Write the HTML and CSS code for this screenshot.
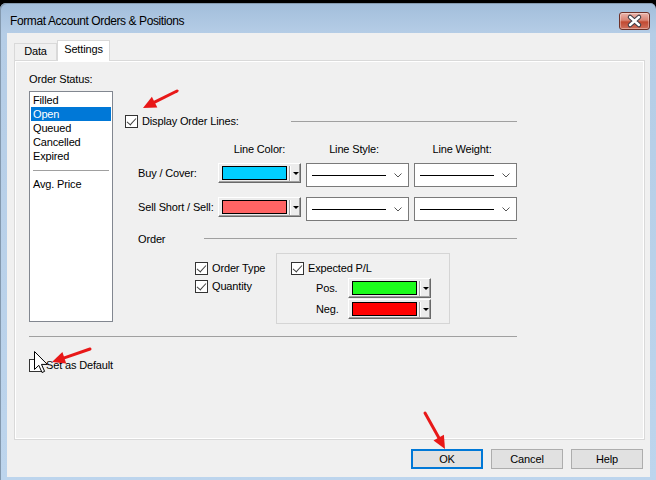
FILE: index.html
```html
<!DOCTYPE html>
<html lang="en">
<head>
  <meta charset="UTF-8" />
  <title>Format Account Orders &amp; Positions</title>
  <link rel="stylesheet" href="styles.css">
</head>
<body>

  <div class="window">
    <div class="titlebar">
      <span class="title">Format Account Orders &amp; Positions</span>
      <button class="close">
        <svg width="29" height="16" viewBox="0 0 29 16">
          <path d="M10 4 L19 12 M19 4 L10 12" stroke="#3c3c46" stroke-width="4.5" stroke-linecap="round"/>
          <path d="M10 4 L19 12 M19 4 L10 12" stroke="#fff" stroke-width="2.4" stroke-linecap="round"/>
        </svg>
      </button>
    </div>

    <div class="client">
      <div class="tabs">
        <div class="tab">Data</div>
        <div class="tab active">Settings</div>
      </div>

      <div class="panel">
        <div class="main">
          <div class="status">
            <div class="status-label">Order Status:</div>
            <ul class="listbox">
              <li>Filled</li>
              <li class="sel">Open</li>
              <li>Queued</li>
              <li>Cancelled</li>
              <li>Expired</li>
              <li class="sep"><span></span></li>
              <li>Avg. Price</li>
            </ul>
          </div>

          <div class="settings">
            <div class="display-row">
              <label class="check"><span class="cb on"></span>Display Order Lines:</label>
              <span class="rule"></span>
            </div>

            <div class="line-row head">
              <span class="row-label"></span>
              <span class="head-color">Line Color:</span>
              <span class="head-combo">Line Style:</span>
              <span class="head-combo">Line Weight:</span>
            </div>

            <div class="line-row buy">
              <span class="row-label">Buy / Cover:</span>
              <div class="color-btn"><span class="swatch cyan"></span><span class="split"></span><span class="tri"></span></div>
              <div class="combo"><span class="line"></span><svg width="8" height="5" viewBox="0 0 8 5"><path d="M0.5 0.5 L4 4 L7.5 0.5" stroke="#555" fill="none"/></svg></div>
              <div class="combo"><span class="line"></span><svg width="8" height="5" viewBox="0 0 8 5"><path d="M0.5 0.5 L4 4 L7.5 0.5" stroke="#555" fill="none"/></svg></div>
            </div>

            <div class="line-row sell">
              <span class="row-label">Sell Short / Sell:</span>
              <div class="color-btn"><span class="swatch salmon"></span><span class="split"></span><span class="tri"></span></div>
              <div class="combo"><span class="line"></span><svg width="8" height="5" viewBox="0 0 8 5"><path d="M0.5 0.5 L4 4 L7.5 0.5" stroke="#555" fill="none"/></svg></div>
              <div class="combo"><span class="line"></span><svg width="8" height="5" viewBox="0 0 8 5"><path d="M0.5 0.5 L4 4 L7.5 0.5" stroke="#555" fill="none"/></svg></div>
            </div>

            <div class="order-row">
              <span>Order</span>
              <span class="rule long"></span>
            </div>

            <div class="order-opts">
              <div class="opts-left">
                <label class="check"><span class="cb on"></span>Order Type</label>
                <label class="check"><span class="cb on"></span>Quantity</label>
              </div>
              <div class="pl-box">
                <label class="check"><span class="cb on"></span>Expected P/L</label>
                <div class="pl-row first">
                  <span class="pl-label">Pos.</span>
                  <div class="color-btn"><span class="swatch green"></span><span class="split"></span><span class="tri"></span></div>
                </div>
                <div class="pl-row">
                  <span class="pl-label">Neg.</span>
                  <div class="color-btn"><span class="swatch red"></span><span class="split"></span><span class="tri"></span></div>
                </div>
              </div>
            </div>
          </div>
        </div>

        <div class="divider"></div>
        <label class="check default"><span class="cb"></span>Set as Default</label>
      </div>

      <div class="buttons">
        <button class="btn ok">OK</button>
        <button class="btn">Cancel</button>
        <button class="btn">Help</button>
      </div>
    </div>
  </div>

  <!-- annotation arrows and mouse pointer drawn over the dialog -->
  <svg class="overlay" width="656" height="480" viewBox="0 0 656 480">
    <g fill="#e81818" stroke="#e81818">
      <line x1="177" y1="91" x2="154.6" y2="102.2" stroke-width="3" stroke-linecap="round"/>
      <polygon points="143,108 151.9,96.8 157.3,107.6" stroke="none"/>
      <line x1="90" y1="349" x2="64.3" y2="357.8" stroke-width="3" stroke-linecap="round"/>
      <polygon points="52,362 62.4,352.1 66.2,363.5" stroke="none"/>
      <line x1="425" y1="413" x2="438.7" y2="437.6" stroke-width="3" stroke-linecap="round"/>
      <polygon points="445,449 433.5,440.5 443.9,434.7" stroke="none"/>
    </g>
    <path d="M34.5 351.5 L34.5 369.5 L38.8 365.3 L42 372.5 L44.6 371.4 L41.5 364.4 L47.3 364.4 Z" fill="#fff" stroke="#000" stroke-width="1" stroke-linejoin="miter"/>
  </svg>

</body>
</html>
```

FILE: styles.css
```css
* {
  box-sizing: border-box;
}

body {
  margin: 0;
  width: 656px;
  height: 480px;
  overflow: hidden;
  background: #000;
  font-family: 'Liberation Sans', Arial, sans-serif;
  font-size: 11px;
  letter-spacing: -0.15px;
  color: #000;
}

/* Window frame */
.window {
  margin-top: 3px;
  height: 477px;
  padding: 0 6px 3px 7px;
  background: linear-gradient(#a2bedb, #b5cde6 30px, #bdd5ed);
  border-radius: 6px 6px 0 0;
  box-shadow: inset 1px 1px 0 #8499ae;
  display: flex;
  flex-direction: column;
}

.titlebar {
  height: 30px;
  flex: none;
  display: flex;
  justify-content: space-between;
  align-items: flex-start;
  padding-left: 3px;
}

.title {
  margin-top: 11px;
  font-size: 12px;
  line-height: 15px;
  letter-spacing: -0.4px;
}

.close {
  margin-top: 9px;
  width: 31px;
  height: 18px;
  padding: 0;
  border: 1px solid #6e3128;
  border-radius: 3px;
  background: linear-gradient(#ebb5ab, #d98474 45%, #c24a32 56%, #cf705d);
  box-shadow: inset 0 0 0 1px rgba(255, 255, 255, 0.35);
  display: flex;
  align-items: center;
  justify-content: center;
}

.client {
  flex: 1;
  background: #f0f0f0;
  padding: 7px 5px 0 7px;
  display: flex;
  flex-direction: column;
}

/* Tabs */
.tabs {
  height: 20px;
  display: flex;
  align-items: flex-end;
  position: relative;
  z-index: 1;
}

.tab {
  border: 1px solid #d9d9d9;
  border-bottom: none;
  text-align: center;
}

.tab:first-child {
  width: 43px;
  height: 17px;
  line-height: 15px;
  background: #f0f0f0;
}

.tab.active {
  width: 53px;
  height: 21px;
  line-height: 17px;
  margin-bottom: -1px;
  background: #fff;
}

.panel {
  height: 380px;
  border: 1px solid #d9d9d9;
  box-shadow: inset 1px 1px 0 #fff, inset -1px -1px 0 #fff;
  background: #f0f0f0;
  padding: 12px 0 0 14px;
}

.main {
  display: flex;
}

/* Order status list */
.status {
  width: 84px;
  flex: none;
}

.status-label {
  height: 13px;
  line-height: 13px;
}

.listbox {
  list-style: none;
  margin: 5px 0 0;
  height: 231px;
  padding: 1px;
  border: 1px solid #828790;
  background: #fff;
}

.listbox li {
  height: 14px;
  line-height: 14px;
  padding-left: 2px;
}

.listbox li.sel {
  background: #0078d7;
  color: #fff;
}

.listbox li.sep {
  display: flex;
  align-items: center;
}

.listbox li.sep span {
  width: 76px;
  height: 1px;
  background: #a0a0a0;
}

/* Right hand settings */
.settings {
  margin-left: 12px;
  width: 392px;
}

.check {
  display: flex;
  align-items: center;
  line-height: 13px;
  height: 13px;
}

.cb {
  position: relative;
  flex: none;
  width: 13px;
  height: 13px;
  margin-right: 4px;
  border: 1px solid #333;
  background: #fff;
}

.cb.on::after {
  content: '';
  position: absolute;
  left: 3px;
  top: 0;
  width: 4px;
  height: 8px;
  border: solid #404040;
  border-width: 0 1.3px 1.3px 0;
  transform: rotate(42deg);
}

.display-row {
  margin-top: 42px;
  height: 13px;
  display: flex;
  align-items: center;
}

.rule {
  margin-left: auto;
  width: 226px;
  height: 1px;
  background: #a0a0a0;
}

.rule.long {
  width: 313px;
}

.line-row {
  display: flex;
  align-items: flex-start;
  margin-left: 13px;
}

.line-row.head {
  margin-top: 15px;
  height: 13px;
  line-height: 13px;
}

.line-row.buy {
  margin-top: 7px;
}

.line-row.sell {
  margin-top: 10px;
}

.row-label {
  width: 80px;
  flex: none;
  line-height: 20px;
}

.head-color {
  width: 83px;
  text-align: center;
}

.head-combo {
  width: 103px;
  margin-left: 5px;
  padding-right: 7px;
  text-align: center;
}

.color-btn {
  width: 83px;
  height: 20px;
  flex: none;
  display: flex;
  align-items: center;
  padding-left: 3px;
  background: #ececec;
  border: 1px solid;
  border-color: #fff #696969 #696969 #fff;
  box-shadow: inset -1px -1px 0 #a0a0a0;
}

.swatch {
  width: 65px;
  height: 14px;
  border: 1px solid #000;
}

.swatch.cyan { background: #00cfff; }
.swatch.salmon { background: #ff6464; }
.swatch.green { background: #1cfc1c; }
.swatch.red { background: #ff0000; }

.split {
  margin-left: 2px;
  width: 2px;
  height: 15px;
  border-left: 1px solid #a0a0a0;
  border-right: 1px solid #fff;
}

.tri {
  margin-left: 2px;
  width: 0;
  height: 0;
  border-left: 3px solid transparent;
  border-right: 3px solid transparent;
  border-top: 3px solid #000;
}

.combo {
  width: 103px;
  height: 24px;
  margin-left: 5px;
  display: flex;
  align-items: center;
  padding: 0 6px 0 5px;
  background: #fff;
  border: 1px solid #7a7a7a;
}

.combo .line {
  width: 74px;
  height: 1px;
  background: #000;
}

.combo svg {
  margin-left: auto;
}

/* Order section */
.order-row {
  margin-top: 11px;
  height: 13px;
  padding-left: 13px;
  display: flex;
  align-items: center;
}

.order-opts {
  display: flex;
  margin-top: 8px;
}

.opts-left {
  margin-left: 70px;
  width: 81px;
  padding-top: 9px;
  display: flex;
  flex-direction: column;
  gap: 5px;
}

.pl-box {
  width: 174px;
  height: 71px;
  border: 1px solid #d5d5d5;
  padding: 8px 0 0 14px;
}

.pl-row {
  display: flex;
  margin: 1px 0 0 25px;
}

.pl-row.first {
  margin-top: 3px;
}

.pl-label {
  width: 32px;
  line-height: 20px;
}

.divider {
  margin-top: 12px;
  width: 488px;
  height: 1px;
  background: #a0a0a0;
}

.check.default {
  margin-top: 22px;
}

/* Dialog buttons */
.buttons {
  display: flex;
  justify-content: flex-end;
  gap: 8px;
  margin: 9px 2px 0 0;
}

.btn {
  width: 72px;
  height: 20px;
  padding: 0;
  font-family: inherit;
  font-size: 11px;
  letter-spacing: inherit;
  color: #000;
  background: #e1e1e1;
  border: 1px solid #adadad;
}

.btn.ok {
  border: 2px solid #0078d7;
}

.overlay {
  position: absolute;
  top: 0;
  left: 0;
  pointer-events: none;
}
```
